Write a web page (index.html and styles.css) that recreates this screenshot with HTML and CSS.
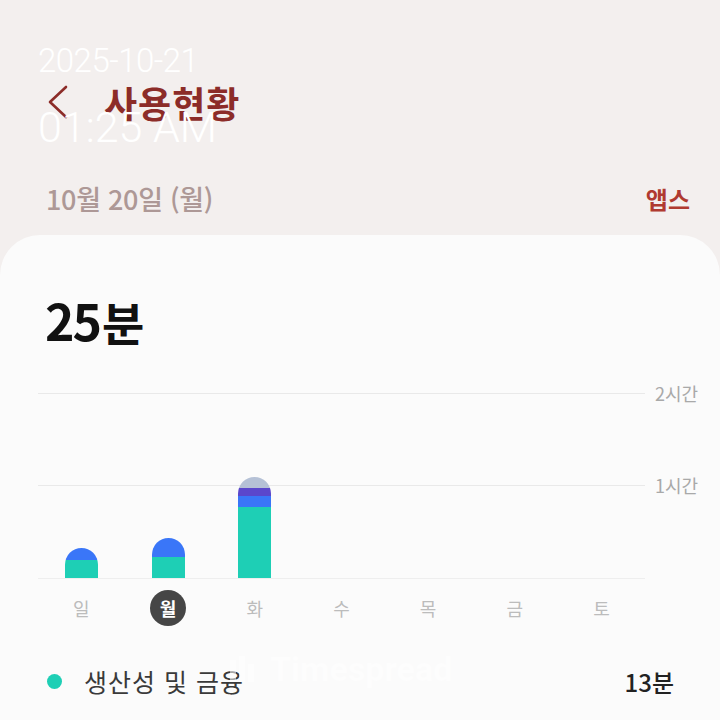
FILE: index.html
```html
<!DOCTYPE html>
<html lang="ko">
<head>
    <meta charset="UTF-8">
    <meta name="viewport" content="width=device-width, initial-scale=1.0">
    <title>사용현황</title>
    <link rel="stylesheet" href="styles.css">
</head>
<body>
    <div class="stamp">
        <div class="stamp-date">2025-10-21</div>
        <div class="stamp-time">01:25 AM</div>
    </div>
    <header class="topbar">
        <svg class="back" width="24" height="34" viewBox="0 0 24 34"><path d="M20 2 L4 17 L20 32" fill="none" stroke="#8c2c28" stroke-width="2.6" stroke-linecap="round" stroke-linejoin="round"/></svg>
        <h1>사용현황</h1>
    </header>
    <div class="date-row">
        <span class="date">10월 20일 (월)</span>
        <span class="apps">앱스</span>
    </div>
    <section class="card">
        <div class="total">25<span class="unit">분</span></div>
        <div class="chart">
            <div class="plot">
                <div class="col"><div class="bar"><i class="blue" style="height:12px"></i><i class="teal" style="height:18px"></i></div></div>
                <div class="col"><div class="bar"><i class="blue" style="height:19px"></i><i class="teal" style="height:21px"></i></div></div>
                <div class="col"><div class="bar"><i class="grey" style="height:11px"></i><i class="purple" style="height:8px"></i><i class="blue" style="height:11px"></i><i class="teal" style="height:71px"></i></div></div>
                <div class="col"></div>
                <div class="col"></div>
                <div class="col"></div>
                <div class="col"></div>
            </div>
            <div class="axis">
                <span>2시간</span>
                <span>1시간</span>
            </div>
        </div>
        <div class="days">
            <span>일</span>
            <span class="active">월</span>
            <span>화</span>
            <span>수</span>
            <span>목</span>
            <span>금</span>
            <span>토</span>
        </div>
        <div class="legend">
            <span class="dot"></span>
            <span class="name">생산성 및 금융</span>
            <span class="mins">13분</span>
        </div>
        <div class="watermark">
            <svg width="30" height="26" viewBox="0 0 30 26"><rect x="0" y="4" width="6" height="22" fill="#fff"/><rect x="9" y="0" width="6" height="26" fill="#fff"/><rect x="18" y="8" width="6" height="18" fill="#fff"/></svg>
            <span>Timespread</span>
        </div>
    </section>
</body>
</html>
```

FILE: styles.css
```css
* { margin: 0; padding: 0; box-sizing: border-box; }
body { font-family: "Noto Sans CJK KR", "Noto Sans", sans-serif; background: #f3efee; width: 720px; height: 720px; overflow: hidden; position: relative; }

.stamp { position: absolute; left: 38px; top: 41px; color: #fff; font-family: Roboto, "Noto Sans", sans-serif; font-weight: 300; z-index: 5; }
.stamp-date { font-size: 33px; line-height: 40px; letter-spacing: -0.5px; }
.stamp-time { font-size: 43px; line-height: 50px; margin-top: 21px; }

.topbar { display: flex; align-items: center; height: 40px; margin-top: 82px; padding-left: 46px; gap: 34px; }
.back { display: block; }
.topbar h1 { font-size: 36px; font-weight: 700; color: #8c2c28; letter-spacing: 1px; line-height: 40px; }

.date-row { display: flex; justify-content: space-between; align-items: center; height: 40px; margin-top: 56px; padding: 0 30px 0 46px; }
.date { font-size: 27px; font-weight: 500; color: #ad9896; letter-spacing: -0.3px; }
.apps { font-size: 24px; font-weight: 700; color: #b03a30; }

.card { position: relative; background: #fbfbfb; border-radius: 40px 40px 0 0; margin-top: 17px; height: 500px; padding: 54px 0 0 0; }
.total { font-size: 50px; font-weight: 700; color: #111; line-height: 60px; padding-left: 45px; letter-spacing: -2px; }
.total .unit { font-size: 46px; letter-spacing: 0; margin-left: 2px; }

.chart { display: flex; margin-top: 42px; padding-left: 38px; }
.plot { width: 607px; height: 186px; display: grid; grid-template-columns: repeat(7, 1fr); align-items: end;
    background: linear-gradient(#e9e9e9, #e9e9e9) 0 0 / 100% 1px no-repeat,
                linear-gradient(#e9e9e9, #e9e9e9) 0 92px / 100% 1px no-repeat,
                linear-gradient(#eeeeee, #eeeeee) 0 185px / 100% 1px no-repeat; }
.col { display: flex; justify-content: center; align-items: flex-end; height: 100%; padding-bottom: 1px; }
.bar { width: 33px; display: flex; flex-direction: column; border-radius: 16.5px 16.5px 0 0; overflow: hidden; }
.bar i { display: block; }
.teal { background: #1ecfb5; }
.blue { background: #3a76f8; }
.purple { background: #5b47cc; }
.grey { background: #b5c1d6; }
.axis { display: flex; flex-direction: column; padding-left: 10px; margin-top: -12px; }
.axis span { font-size: 18px; color: #a9a9a9; line-height: 24px; height: 92px; }

.days { display: grid; grid-template-columns: repeat(7, 86.7px); margin-top: 11px; padding-left: 38px; }
.days span { justify-self: center; width: 36px; height: 36px; border-radius: 50%; display: flex; align-items: center; justify-content: center; font-size: 18px; color: #bcbcbc; }
.days .active { background: #464646; color: #fff; font-weight: 700; }

.legend { display: flex; align-items: center; margin-top: 38px; padding: 0 46px 0 47px; height: 34px; }
.dot { width: 15px; height: 15px; border-radius: 50%; background: #1ecfb5; }
.name { font-size: 25px; color: #3a3a3a; margin-left: 22px; letter-spacing: 1px; }
.mins { margin-left: auto; font-size: 24px; font-weight: 500; color: #222; }

.watermark { position: absolute; left: 230px; top: 414px; display: flex; align-items: center; gap: 10px; opacity: 0.55; }
.watermark span { font-family: Roboto, sans-serif; font-weight: 700; font-size: 34px; color: #fff; }
```
